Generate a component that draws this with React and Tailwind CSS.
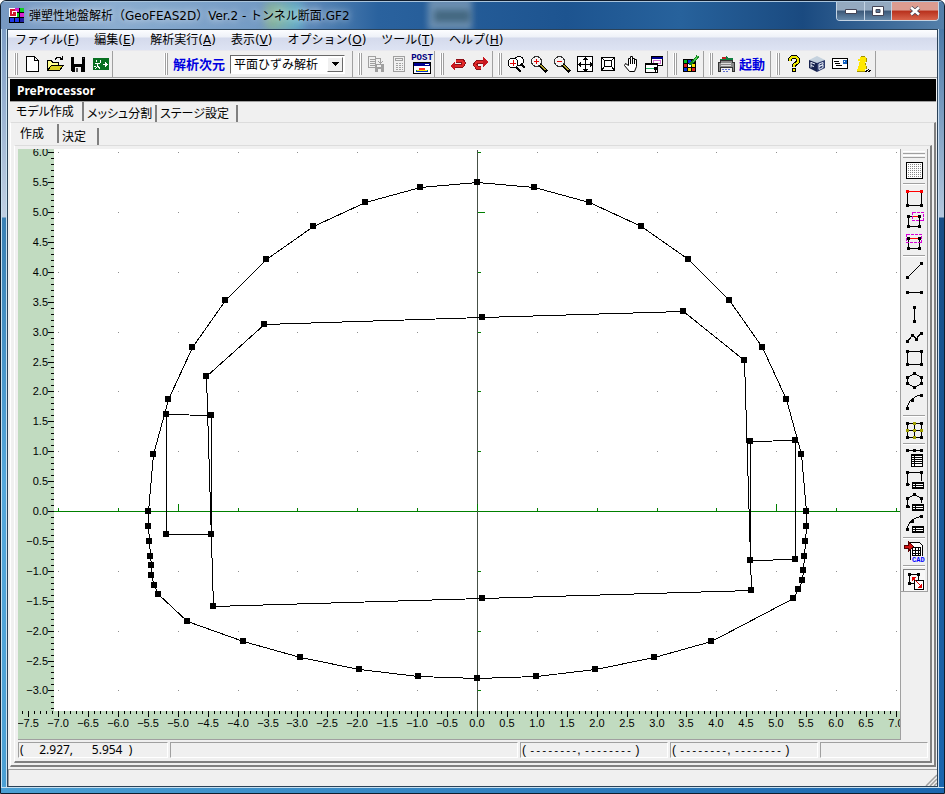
import React, { useState } from "react";

const menus = [
  ["ファイル", "F"],
  ["編集", "E"],
  ["解析実行", "A"],
  ["表示", "V"],
  ["オプション", "O"],
  ["ツール", "T"],
  ["ヘルプ", "H"],
];

// model geometry, canvas pixels
const outer = [
  [477, 182], [534, 187], [589, 202], [641, 226], [688, 259], [729, 300], [762, 347],
  [786, 399], [801, 454], [806, 511], [806, 526], [805, 541], [804, 556], [803, 570],
  [802, 580], [798, 589], [793, 598], [711, 641], [654, 657], [595, 669], [536, 676],
  [477, 678], [418, 676], [359, 669], [300, 657], [243, 641], [187, 621], [158, 594],
  [154, 585], [151, 575], [151, 565], [150, 556], [149, 541], [148, 526], [148, 511],
  [153, 454], [168, 399], [192, 347], [225, 300], [266, 259], [313, 226], [365, 202],
  [420, 187],
];
const inner = [[264, 324], [482, 317], [683, 311], [744, 360], [751, 590], [482, 598], [213, 606], [206, 376]];
const leftBox = [[166, 414], [211, 415], [211, 534], [166, 534]];
const rightBox = [[750, 441], [795, 440], [795, 559], [750, 560]];
const shapes = [outer, inner, leftBox, rightBox];

const OX = 477;
const OY = 511;
const px = v => Math.round(OX + v * 59.85);
const py = v => Math.round(OY - v * 59.8);
const label = v => (v < 0 ? "−" : "") + Math.abs(v).toFixed(1);
const range = (from, to) => Array.from({ length: to - from + 1 }, (_, i) => from + i);

function Canvas() {
  const xs = range(-76, 70);
  const ys = range(-33, 60);
  const units = range(-7, 7);
  return (
    <svg viewBox="18 149 883 591" className="block h-full w-full bg-white" shapeRendering="crispEdges">
      <path d="M18 149h36v562h846v29H18z" fill="#c1dbc0" />
      {/* grid */}
      {units.map(x =>
        range(-3, 6).map(y => (
          <rect key={x + "_" + y} x={px(x)} y={py(y)} width="1" height="1" fill="#909090" />
        ))
      )}
      {/* axes */}
      <rect x="54" y={OY} width="846" height="1" fill="#008000" />
      <rect x={OX} y="150" width="1" height="561" fill="#465046" />
      {units.map(x => (
        <rect key={x} x={px(x)} y={OY - (x % 5 ? 3 : 7)} width="1" height={x % 5 ? 3 : 7} fill="#008000" />
      ))}
      {range(-3, 6).map(y => (
        <rect key={y} x={OX + 1} y={py(y)} width={y % 5 ? 3 : 7} height="1" fill="#008000" />
      ))}
      {/* rulers */}
      {ys.map(i => (
        <rect key={i} x={i % 5 ? 51 : 48} y={py(i / 10)} width={i % 5 ? 3 : 6} height="1" />
      ))}
      {xs.map(i => (
        <rect key={i} x={px(i / 10)} y="711" width="1" height={i % 5 ? 3 : 6} />
      ))}
      <g className="font-['Liberation_Sans',sans-serif] text-[11px]">
        {range(-6, 12).map(i => (
          <text key={i} x="48" y={py(i / 2) + 4} textAnchor="end">{label(i / 2)}</text>
        ))}
        {range(-15, 14).map(i => (
          <text key={i} x={px(i / 2)} y="727" textAnchor="middle">{label(i / 2)}</text>
        ))}
      </g>
      {shapes.map((s, i) => (
        <g key={i}>
          <polygon points={s.map(p => `${p[0] + 0.5},${p[1] + 0.5}`).join(" ")} fill="none" stroke="#000" />
          {s.map(p => (
            <rect key={p.join()} x={p[0] - 3} y={p[1] - 3} width="6" height="6" />
          ))}
        </g>
      ))}
      <path d="M900.5 149v590.5M18 739.5h883" stroke="#a0a0a0" />
    </svg>
  );
}

function Icon({ w = 18, h = 18, children }) {
  return (
    <svg width={w} height={h} viewBox={`0 0 ${w} ${h}`} fill="none" stroke="#000" shapeRendering="crispEdges" aria-hidden="true">
      {children}
    </svg>
  );
}

function Tool({ name, wide, children }) {
  return (
    <button aria-label={name} className={(wide ? "w-6" : "w-[23px]") + " flex h-6 shrink-0 items-center justify-center"}>
      {children}
    </button>
  );
}

function Group({ children, className = "" }) {
  return (
    <div className={"flex h-[26px] shrink-0 items-center border-r border-[#a0a0a0] " + className}>
      <div className="mr-[2px] ml-[5px] flex h-[22px]">
        <i className="w-[2px] border-r border-l border-l-white border-r-[#a0a0a0]" />
        <i className="w-[2px] border-r border-l border-l-white border-r-[#a0a0a0]" />
      </div>
      {children}
    </div>
  );
}

function Lens({ sign }) {
  return (
    <Icon>
      <circle cx="6.500" cy="6.500" r="5" fill="#f4f4f4" stroke="#333" />
      <path d="M4 6.500h5" stroke="#e00000" />
      {sign === "+" && <path d="M6.500 4v5" stroke="#e00000" />}
      <path d="M10 10l7 7" strokeWidth="3" />
      <path d="M10.500 10l5 5" stroke="#b0a030" />
    </Icon>
  );
}

function Toolbar() {
  return (
    <div className="flex h-[27px] border-b border-[#a0a0a0]">
      <Group className="ml-px">
        <Tool name="新規">
          <Icon><path d="M3.500 1.500h8l4 4v11h-12zM11.500 1.500v4h4" fill="#fff" /></Icon>
        </Tool>
        <Tool name="開く">
          <Icon>
            <path d="M1.500 15.500v-10h4l1 2h6v3" fill="#ffff90" />
            <path d="M1.500 15.500l4-5.500h12l-4 5.500z" fill="#d8d020" />
            <path d="M9 4.500l2-2h3l2 2M16.500 1v4M14 4.500h3" />
          </Icon>
        </Tool>
        <Tool name="保存">
          <Icon>
            <path d="M2 2h14v15H3l-1-1z" fill="#000" stroke="none" />
            <path d="M5 2h8v7H5zM6 12h6v5H6z" fill="#f0f0f0" stroke="none" />
            <path d="M14 3h1v1h-1zM7 13h2v4H7z" fill="#555" stroke="none" />
          </Icon>
        </Tool>
        <Tool name="終了">
          <Icon>
            <path d="M1 3h16v12H1z" fill="#087020" stroke="none" />
            <path d="M11 9.500h5M13.500 7v5M14.500 8v3M4.500 5v2M3 8.500h5M5.500 9v2l-2 3M6 11l2 3M8.500 5v3M2 11.500h2" stroke="#fff" />
          </Icon>
        </Tool>
      </Group>
      <Group className="ml-[46px]">
        <label htmlFor="dim" className="ml-[3px] w-[57px] text-[13px] leading-4 font-bold text-[#0000e0]">解析次元</label>
        <div className="relative mr-[7px] flex">
          <select id="dim" className="h-[19px] w-[115px] appearance-none border border-t-[#696969] border-r-white border-b-white border-l-[#696969] bg-white pl-[3px] text-[12px] leading-4">
            <option>平面ひずみ解析</option>
          </select>
          <span className="pointer-events-none absolute top-[2px] right-[2px] flex h-[15px] w-[16px] items-center justify-center border border-t-white border-r-[#696969] border-b-[#696969] border-l-white bg-[#f0f0f0]">
            <svg width="7" height="4" shapeRendering="crispEdges"><path d="M0 0h7L3.500 4z" /></svg>
          </span>
        </div>
      </Group>
      <Group>
        <Tool name="データ保存">
          <Icon>
            <path d="M1.500 1.500h7v11h-7zM3 4.500h6M3 6.500h6M3 8.500h5M3 10.500h5M8.500 3.500h5v4M11 6l2.500 2.500L16 6" stroke="#a0a0a0" />
            <path d="M8 9h9v8H8z" fill="#a0a0a0" stroke="none" />
            <path d="M10 10h4v2h-4zM11 14h3v3h-3z" fill="#f0f0f0" stroke="none" />
          </Icon>
        </Tool>
        <Tool name="計算">
          <Icon>
            <path d="M3.500 1.500h11v15h-11zM5.500 3.500h7v2h-7z" stroke="#a0a0a0" />
            <path d="M6 8.500h7M6 10.500h7M6 12.500h7M6 14.500h7" stroke="#a0a0a0" strokeDasharray="2 1" />
          </Icon>
        </Tool>
        <Tool name="ポスト" wide>
          <span className="flex flex-col items-center">
            <b className="h-2 font-['Liberation_Mono',monospace] text-[9px] leading-[8px] text-[#000080]">POST</b>
            <Icon w={18} h={12}>
              <path d="M.5 .5h17v11H.5z" fill="#fff" />
              <path d="M1 1h16v3H1z" fill="#000090" stroke="none" />
              <path d="M12 2.500h4" stroke="#fff" />
              <path d="M3 10V8h3V6h6v2h3v2z" fill="#00a050" stroke="none" />
              <path d="M6 8V6h6v2z" fill="#ff3020" stroke="none" />
              <path d="M4 8.500h10" stroke="#ffe000" />
              <path d="M3 9.500h12" stroke="#0030d0" />
            </Icon>
          </span>
        </Tool>
      </Group>
      <Group>
        <Tool name="元に戻す">
          <Icon>
            <path d="M7 5.500h6l2 2.500-2 3H5" stroke="#8c1018" strokeWidth="4" />
            <path d="M7 5.500h6l2 2.500-2 3H5" stroke="#e02828" strokeWidth="2" />
            <path d="M6 6v10l-5-5z" fill="#c81820" stroke="none" />
          </Icon>
        </Tool>
        <Tool name="やり直し">
          <Icon>
            <path d="M11 7H5l-2 2.500 2 3h4" stroke="#8c1018" strokeWidth="4" />
            <path d="M11 7H5l-2 2.500 2 3h4" stroke="#e02828" strokeWidth="2" />
            <path d="M11 2v10l6-5z" fill="#c81820" stroke="none" />
          </Icon>
        </Tool>
      </Group>
      <Group className="pr-[2px]">
        <Tool name="範囲拡大">
          <Icon>
            <circle cx="12" cy="6" r="4.500" fill="#fff" />
            <path d="M14 9l4 4" strokeWidth="2" />
            <circle cx="6" cy="8" r="5" fill="#fff" />
            <path d="M3 8.500h6M6.500 5v6" stroke="#e00000" />
            <path d="M9 12l5 5" strokeWidth="2" />
          </Icon>
        </Tool>
        <Tool name="拡大"><Lens sign="+" /></Tool>
        <Tool name="縮小"><Lens sign="-" /></Tool>
        <Tool name="全体表示">
          <Icon>
            <path d="M1.500 1.500h15v15h-15zM9.500 2v15M2 9.500h15" fill="#fff" />
            <path d="M7 4.500h5M8 3.500h3M7 14.500h5M8 15.500h3M4.500 7v5M3.500 8v3M14.500 7v5M15.500 8v3" />
          </Icon>
        </Tool>
        <Tool name="等倍">
          <Icon><path d="M2.500 2.500h13v13h-13zM5.500 5.500h7v6h-7zM2.500 2.500l3 3M15.500 2.500l-3 3M2.500 15.500l3-4M15.500 15.500l-3-4" fill="#fff" /></Icon>
        </Tool>
        <Tool name="移動">
          <Icon>
            <path d="M7.500 16.500l-5-6 1-2 3 2v-7h2v-2h2v2h2v1h2v7l-2 5z" fill="#fff" stroke="#000" shapeRendering="auto" />
            <path d="M8.500 4v5M10.500 3v6M12.500 4v5" />
          </Icon>
        </Tool>
        <Tool name="ウィンドウ">
          <Icon w={20}>
            <path d="M7.500 1.500h11v9h-11z" fill="#fff" />
            <path d="M8 2h11v2H8z" fill="#000090" stroke="none" />
            <path d="M9.500 5.500h7v3h-7z" stroke="#d070d0" />
            <path d="M1.500 9.500h12v8h-12z" fill="#fff" />
            <path d="M1 8h13v2H1z" fill="#000" stroke="none" />
            <path d="M2 13.500h9" stroke="#20b060" />
            <path d="M10 12h3v3h-3zM11 15h1v3h-1z" fill="#000" stroke="none" />
          </Icon>
        </Tool>
      </Group>
      <Group className="pr-px">
        <Tool name="表示色">
          <Icon>
            <path d="M1 4h13v13H1z" fill="#000" stroke="none" />
            <path d="M2 5h3v3H2z" fill="#00c020" stroke="none" />
            <path d="M6 5h3v3H6zM2 13h3v3H2z" fill="#0030e0" stroke="none" />
            <path d="M2 9h3v3H2zM10 13h3v3h-3z" fill="#e02020" stroke="none" />
            <path d="M6 13h3v3H6zM10 9h3v3h-3z" fill="#ffe000" stroke="none" />
            <path d="M6 9h3v3H6z" fill="#fff" stroke="none" />
            <path d="M8 10l8-9" stroke="#108020" strokeWidth="3" />
            <path d="M11 7l5-6" stroke="#50d050" />
          </Icon>
        </Tool>
      </Group>
      <Group>
        <button className="flex h-6 w-[55px] items-center gap-1 pl-[2px] text-[13px] leading-4 font-bold whitespace-nowrap text-[#0000e0]">
          <Icon>
            <path d="M3 5h12v2h2v9h-2v-4H3v4H1V7h2z" fill="#888" stroke="#333" />
            <path d="M2 4h5l2-3 3 2h4v2H3z" fill="#108040" stroke="none" />
            <path d="M5 2h4v2H5z" fill="#c02020" stroke="none" />
            <path d="M4 8.500h10M4 10.500h10" stroke="#ddd" />
            <path d="M5 14.500h8M6 16.500h6" stroke="#6070d0" strokeDasharray="2 1" />
          </Icon>
          起動
        </button>
      </Group>
      <Group>
        <Tool name="ヘルプ">
          <Icon>
            <path d="M5 6V4l2-2h4l2 2v3l-4 3v2M9 13v4" stroke="#000" strokeWidth="4" />
            <path d="M5 6V4l2-2h4l2 2v3l-4 3v2M9 14v2" stroke="#f0e800" strokeWidth="2" />
          </Icon>
        </Tool>
        <Tool name="製品">
          <Icon>
            <g shapeRendering="auto" stroke="none">
              <path d="M1 5l8-4 8 4-8 3z" fill="#c5d2de" />
              <path d="M1 5l8 3v9l-8-4z" fill="#17234f" />
              <path d="M17 5L9 8v9l8-4z" fill="#2c3a6c" />
              <path d="M3 7.500l4 1.500M3 10.500l3 1M3 7v5.500M11 9v5.500M11 9l4-1.500v2L11 11.500l4-1.500v2.500L11 14.500" fill="none" stroke="#e8eef8" />
            </g>
          </Icon>
        </Tool>
        <Tool name="メール">
          <Icon>
            <path d="M1.500 3.500h15v10h-15z" fill="#fff" />
            <path d="M3 6.500h5M4 8.500h5M5 10.500h6" />
            <path d="M12 5h4v4h-4z" fill="#1060c0" stroke="none" />
            <path d="M13 6h1v1h-1z" fill="#fff" stroke="none" />
          </Icon>
        </Tool>
        <Tool name="情報" wide>
          <Icon>
            <path d="M4 4h2V2h1V1h4v1h1v5h-1v3h1v4h-1v2H3v-2h1v-3h1V7h1V6H4z" fill="#ffe800" stroke="none" />
            <path d="M6.500 1.500h4M12.500 3v4M11.500 8v2M12.500 11v3M3 16.500h9" stroke="#a09000" />
            <path d="M12 15.500h2M14 14.500h1M15 15.500h2M11 16.500h2M14 16.500h2" />
          </Icon>
        </Tool>
      </Group>
    </div>
  );
}

const dot = (x, y, c = "#000") => <rect key={x + "-" + y} x={x - 1} y={y - 1} width="3" height="3" fill={c} stroke="none" />;

function Nodes({ pts }) {
  return <>{pts.map(p => dot(p[0], p[1]))}</>;
}

function Sheet({ x, y, w, h }) {
  return (
    <>
      <rect x={x + 0.5} y={y + 0.5} width={w} height={h} fill="#fff" />
      <path d={`M${x} ${y + 1}h${w}`} strokeWidth="2" />
      <path d={`M${x + 3.5} ${y}v${h}M${x} ${y + 3.5}h${w}M${x} ${y + 5.5}h${w}`} />
      {h > 9 && <path d={`M${x} ${y + 7.5}h${w}M${x} ${y + 9.5}h${w}`} />}
    </>
  );
}

const palette = [
  [
    ["格子", <><rect x="3.500" y="3.500" width="16" height="16" fill="#fff" /><path d="M5 5.500h13M5 7.500h13M5 9.500h13M5 11.500h13M5 13.500h13M5 15.500h13M5 17.500h13" stroke="#888" strokeDasharray="1 1" /></>],
  ],
  [
    ["選択", <><path d="M4.500 4v14h14V4" /><path d="M4 4.500h14" stroke="#f00" />{dot(4, 4, "#f00")}{dot(18, 4, "#f00")}<Nodes pts={[[4, 18], [18, 18]]} /></>],
    ["範囲選択", <><path d="M5.500 7.500v10h11v-10z" /><path d="M9 7.500h7" stroke="#f00" /><rect x="9.500" y="3.500" width="11" height="8" stroke="#d800d8" strokeDasharray="3 1" /><Nodes pts={[[5, 7], [5, 17], [16, 17], [16, 7]]} /></>],
    ["交差選択", <><path d="M5.500 7.500v10h11v-10" /><path d="M5 7.500h12" stroke="#f00" /><rect x="3.500" y="3.500" width="15" height="8" stroke="#d800d8" strokeDasharray="3 1" /><Nodes pts={[[5, 7], [5, 17], [16, 17], [16, 7]]} /></>],
  ],
  [
    ["線分", <><path d="M4.500 18.500l14-14" /><Nodes pts={[[4, 18], [18, 4]]} /></>],
    ["水平線", <><path d="M4 11.500h14" /><Nodes pts={[[4, 11], [18, 11]]} /></>],
    ["鉛直線", <><path d="M11.500 4v14" /><Nodes pts={[[11, 4], [11, 18]]} /></>],
    ["連続線", <><path d="M4.500 16.500l5-6 4 3 5-6" /><Nodes pts={[[4, 16], [9, 10], [13, 14], [18, 8]]} /></>],
    ["矩形", <><path d="M4.500 4.500h14v13h-14z" /><Nodes pts={[[4, 4], [18, 4], [18, 17], [4, 17]]} /></>],
    ["多角形", <><path d="M11.500 4.500l7 4v6l-7 4-7-4v-6z" /><Nodes pts={[[11, 4], [18, 8], [18, 14], [11, 18], [4, 14], [4, 8]]} /></>],
    ["円弧", <><path d="M4.500 17.500c0-7 6-12 14-14" /><Nodes pts={[[4, 17], [9, 9], [18, 4]]} /></>],
  ],
  [
    ["メッシュ", <><path d="M4.500 4.500h14v14h-14zM11.500 4v14M4 11.500h14" /><Nodes pts={[[4, 4], [18, 4], [18, 18], [4, 18]]} />{[[11, 4], [4, 11], [11, 11], [18, 11], [11, 18]].map(p => dot(p[0], p[1], "#a0a000"))}</>],
  ],
  [
    ["節点表", <><path d="M4 3.500h14" /><Sheet x={8} y={7} w={11} h={12} /><Nodes pts={[[4, 3], [11, 3], [18, 3]]} /></>],
    ["矩形表", <><path d="M7 15.500H4.500v-12h14V12" /><Sheet x={9} y={13} w={11} h={6} /><Nodes pts={[[4, 3], [18, 3], [4, 15]]} /></>],
    ["多角形表", <><path d="M7 16.500l-2.500-2v-7l7-4 7 4V12" /><Sheet x={9} y={13} w={11} h={6} /><Nodes pts={[[4, 7], [11, 3], [18, 7], [4, 15]]} /></>],
    ["円弧表", <><path d="M4.500 16.500c0-7 6-12 14-13" /><Sheet x={9} y={13} w={11} h={6} /><Nodes pts={[[4, 16], [9, 8], [18, 3]]} /></>],
  ],
  [
    ["CAD読込", <><path d="M7.500 1.500h9l3 3v14h-12z" fill="#fff" /><path d="M9.500 6.500h8v8h-8zM12.500 6v8M15.500 6v8M9 9.500h9M9 12.500h9" /><path d="M8 15h14v7H8z" fill="#f0f0f0" stroke="none" /><path d="M1.500 4h4V1l5 4.500-5 4.500V7h-4z" fill="#d01010" stroke="#500" /><text x="9" y="21" fontSize="7" fill="#0000ff" stroke="none" className="font-['Liberation_Mono',monospace] font-bold">CAD</text></>],
  ],
  [
    ["拡大縮小", <><path d="M5.500 4.500h9v9h-9z" /><Nodes pts={[[5, 4], [14, 4], [5, 13], [14, 13]]} /><rect x="10.500" y="10.500" width="9" height="9" fill="#fff" /><path d="M8 11.500V7h4.500zM18 13v5h-5z" fill="#e00000" stroke="none" /><path d="M9 8l8 8" stroke="#e00000" /></>],
  ],
];

function Palette() {
  return (
    <div className="w-[27px] shrink-0">
      <div className="flex flex-col border-r border-b border-[#a0a0a0] px-[2px]">
        <div className="flex h-[10px] flex-col justify-center gap-px pt-px">
          <i className="h-[3px] border-t border-b border-t-white border-b-[#a0a0a0]" />
          <i className="h-[3px] border-t border-b border-t-white border-b-[#a0a0a0]" />
        </div>
        {palette.map((group, g) => (
          <React.Fragment key={g}>
            {g > 0 && <div className="my-[2px] h-[2px] border-t border-b border-t-[#a0a0a0] border-b-white" />}
            {group.map(([name, art]) => (
              <button
                key={name}
                aria-label={name}
                className={
                  name === "拡大縮小"
                    ? "h-[22px] border-t border-l border-[#808080] bg-[#f8f8f8]"
                    : "h-[22px]"
                }
              >
                <Icon w={22} h={22}>{art}</Icon>
              </button>
            ))}
          </React.Fragment>
        ))}
      </div>
    </div>
  );
}

function Tab({ active, onClick, children, className }) {
  return (
    <button
      role="tab"
      aria-selected={active}
      onClick={onClick}
      className={
        "border-r-2 border-[#808080] text-left text-[12px] leading-4 whitespace-nowrap [font-feature-settings:'palt'] " +
        (active ? "h-[19px] self-start pb-[2px] pl-[6px] " : "h-[17px] self-end pb-[3px] pl-[3px] ") +
        className
      }
    >
      {children}
    </button>
  );
}

const Dashes = () => (
  <>
    {"( "}
    <span className="font-['Liberation_Mono',monospace] text-[10px]">--------</span>
    {", "}
    <span className="font-['Liberation_Mono',monospace] text-[10px]">--------</span>
    {" )"}
  </>
);

function Cell({ className, children }) {
  return (
    <div className={"h-4 overflow-hidden border border-t-[#a0a0a0] border-r-white border-b-white border-l-[#a0a0a0] pl-px text-[12px] leading-[14px] whitespace-pre " + className}>
      {children}
    </div>
  );
}

function App() {
  const [tab, setTab] = useState(0);
  const [sub, setSub] = useState(0);
  return (
    <div className="flex h-screen min-h-[640px] w-full flex-col overflow-hidden rounded-t-md border border-[#101c2c] bg-[linear-gradient(90deg,#4ba0d4,#1b66ae)] font-['Noto_Sans_CJK_JP','Noto_Sans',sans-serif] text-black">
      <header className="relative flex h-7 shrink-0 items-center overflow-hidden border-t border-[#a9c4dc] bg-[linear-gradient(90deg,#7698c2_0,#8badd0_12%,#6f97c2_30%,#2a629e_40%,#1d5490_60%,#27629c_72%,#1a4a80_85%,#5580aa_100%)] pl-[7px]">
        <i className="absolute top-0 left-[265px] h-7 w-9 bg-[linear-gradient(90deg,#a4c86a,#58c8e0)] opacity-60 blur-[5px]" />
        <i className="absolute -top-1 left-[427px] h-8 w-11 bg-[#9db3c4] opacity-60 blur-[3px]" />
        <i className="absolute top-2 left-[433px] h-3 w-9 bg-[#294d60] opacity-60 blur-[3px]" />
        <svg width="17" height="17" className="relative" shapeRendering="crispEdges">
          <path d="M1 1h15v15H1z" />
          <path d="M7 1h4v4H7zM12 6h4v4h-4z" fill="#d820d0" />
          <path d="M12 1h4v4h-4zM7 6h4v4H7z" fill="#10d020" />
          <path d="M2 11h4v4H2zM7 11h4v4H7z" fill="#2038e8" />
          <path d="M12 11h4v4h-4z" fill="#2020a0" />
          <path d="M7 3H3v5h4V6H5" fill="none" stroke="#fff" strokeWidth="4" />
          <path d="M7 3H3v5h4V6H5" fill="none" stroke="#d01830" strokeWidth="2" />
        </svg>
        <h1 className="relative ml-1 font-['DejaVu_Sans','Noto_Sans_CJK_JP',sans-serif] text-[12px] leading-4 whitespace-nowrap [text-shadow:0_0_6px_#ffffffa0,0_0_10px_#ffffff80]">
          弾塑性地盤解析（GeoFEAS2D）Ver.2 - トンネル断面.GF2
        </h1>
        <div className="relative mr-[5px] ml-auto flex h-[19px] self-start overflow-hidden rounded-b border border-t-0 border-[#c4d4e4]">
          <button aria-label="最小化" className="flex w-7 items-center justify-center border-r border-[#c4d4e4] bg-[linear-gradient(#94a9bf_45%,#3b5878_50%,#6688a8)]">
            <svg width="12" height="6"><path d="M.5 1.500h11v4H.5z" fill="#fff" stroke="#445" /></svg>
          </button>
          <button aria-label="最大化" className="flex w-[27px] items-center justify-center border-r border-[#c4d4e4] bg-[linear-gradient(#94a9bf_45%,#3b5878_50%,#6688a8)]">
            <svg width="12" height="10"><path d="M.5 .5h11v9H.5z" fill="#fff" stroke="#445" /><path d="M4 3.500h4v3H4z" fill="#5a7898" stroke="#445" /></svg>
          </button>
          <button aria-label="閉じる" className="flex w-[46px] items-center justify-center bg-[linear-gradient(#dc9c90_45%,#b8301c_50%,#d8644c)]">
            <svg width="12" height="10"><path d="M2 1.500l8 7M10 1.500l-8 7" stroke="#445" strokeWidth="4" /><path d="M2 1.500l8 7M10 1.500l-8 7" stroke="#fff" strokeWidth="2.500" /></svg>
          </button>
        </div>
      </header>

      <div className="flex min-h-0 flex-1">
        <div className="w-[6px] shrink-0 border-r border-l border-[#c8e0f0] bg-[linear-gradient(#7d9dc6_0,#c0cfe2_188px,#3a80b4_189px,#55a8dc_60%,#4ba0d4)]" />
        <main className="flex min-w-0 flex-1 flex-col border border-[#2b4258] bg-[#f0f0f0]">
          <nav className="flex h-[21px] shrink-0 items-center gap-[15px] border-b border-[#e8e8ee] bg-[linear-gradient(#fcfdff_0,#eef1f8_35%,#d4daec_40%,#dde3f3_100%)] pl-[7px] font-['DejaVu_Sans','Noto_Sans_CJK_JP',sans-serif] text-[12px] leading-4">
            {menus.map(([name, key]) => (
              <button key={key} className="whitespace-nowrap">
                {name}(<u>{key}</u>)
              </button>
            ))}
          </nav>
          <Toolbar />
          <div className="mr-px ml-[2px] flex min-h-0 flex-1 flex-col">
            <h2 className="mt-px h-[23px] shrink-0 border-b border-[#a0a0a0] bg-black pl-[7px] font-['Noto_Sans','Noto_Sans_CJK_JP',sans-serif] text-[12px] leading-[23px] font-bold text-white">
              PreProcessor
            </h2>
            <div role="tablist" className="flex h-5 shrink-0">
              {["モデル作成", "メッシュ分割", "ステージ設定"].map((t, i) => (
                <Tab key={t} active={tab === i} onClick={() => setTab(i)} className={["w-[74px]", "w-[73px]", "w-[81px]"][i]}>
                  {t}
                </Tab>
              ))}
            </div>
            <section className="flex min-h-0 flex-1 flex-col border-t border-r-2 border-b-2 border-l border-t-[#dcdcdc] border-r-[#808080] border-b-[#808080] border-l-white pt-px pr-[2px] pb-[2px] pl-[3px]">
              <div role="tablist" className="flex h-[21px] shrink-0">
                {["作成", "決定"].map((t, i) => (
                  <Tab key={t} active={sub === i} onClick={() => setSub(i)} className={["w-[45px]", "w-10"][i]}>
                    {t}
                  </Tab>
                ))}
              </div>
              <div className="flex min-h-0 flex-1 flex-col border-t border-r-2 border-b-2 border-l border-t-[#dcdcdc] border-r-[#808080] border-b-[#808080] border-l-white pt-[3px] pr-[2px] pb-[3px] pl-[3px]">
                <div className="flex min-h-0 flex-1">
                  <div className="min-w-0 flex-1">
                    <Canvas />
                  </div>
                  <Palette />
                </div>
                <div className="mt-[2px] flex shrink-0 gap-[2px]">
                  <Cell className="w-[150px] font-['Noto_Sans',sans-serif]">{"(     2.927,      5.954  )"}</Cell>
                  <Cell className="min-w-0 flex-1" />
                  <Cell className="w-[148px] font-['Liberation_Sans',sans-serif]"><Dashes /></Cell>
                  <Cell className="w-[148px] font-['Liberation_Sans',sans-serif]"><Dashes /></Cell>
                  <Cell className="w-[108px]" />
                </div>
              </div>
            </section>
          </div>
          <footer className="mt-[2px] flex h-[17px] shrink-0 items-end justify-end border-t border-l border-[#a0a0a0]">
            <svg width="12" height="12" stroke="#a0a0a0"><path d="M1 12L12 1M5 12l7-7M9 12l3-3" strokeWidth="1.500" /></svg>
          </footer>
        </main>
        <div className="w-[6px] shrink-0 border-l border-[#c8dcf0] bg-[linear-gradient(#4c7aa8_0,#b4c8de_188px,#174e86_189px,#1b66ae)]" />
      </div>
      <div className="h-[6px] shrink-0 border-t border-[#c8e0f0]" />
    </div>
  );
}

export default App;
